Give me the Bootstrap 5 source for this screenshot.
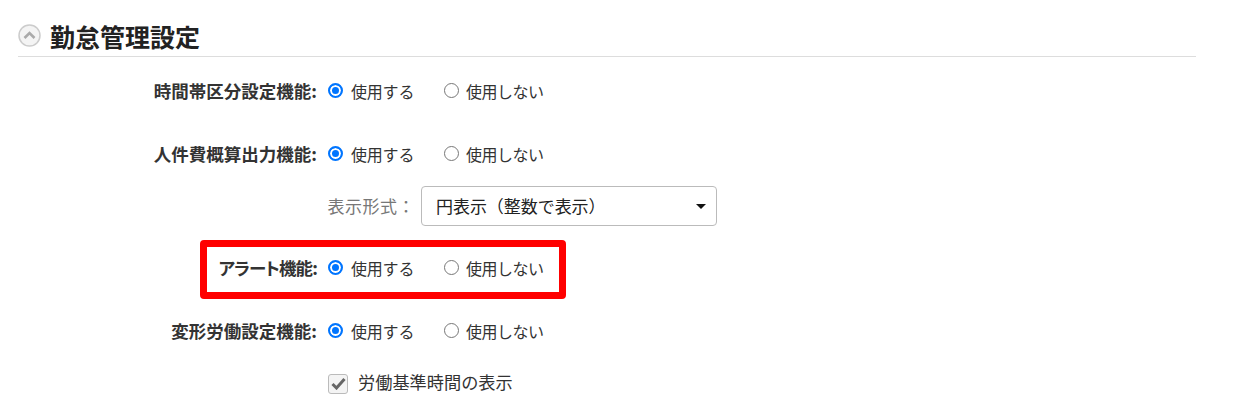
<!DOCTYPE html>
<html lang="ja">
<head>
<meta charset="utf-8">
<title>勤怠管理設定</title>
<link rel="stylesheet" href="https://cdn.jsdelivr.net/npm/bootstrap@5.3.0/dist/css/bootstrap.min.css">
<style>
body{font-family:"Noto Sans CJK JP","Liberation Sans",sans-serif;color:#333;background:#fff;font-size:16px;letter-spacing:-.2px}
.sheet{width:1178px;margin-left:18px;padding-top:18px}
.sect-head{height:39px;border-bottom:1px solid #ddd;gap:9px;padding-bottom:3px}
.sect-title{font-size:25px;font-weight:700;color:#222;margin:0;line-height:36px;letter-spacing:0}
.set-row{height:30px}
.set-label{width:299px;text-align:right;font-weight:700;font-size:17.5px;color:#333;margin:0;letter-spacing:0;white-space:nowrap}
.kana-fit{font-feature-settings:"palt";letter-spacing:-.9px}
.choice{display:flex;align-items:center;margin:0}
.choice input{appearance:none;width:15px;height:15px;border:1px solid #777;border-radius:50%;background:#fff;margin:0 8px 2px 0;flex:none}
.choice input:checked{border:2px solid #0075ff;box-shadow:inset 0 0 0 2px #fff;background:#0075ff}
.choices{margin-left:11px;display:flex}
.c-first{width:116px}
.c-second{letter-spacing:-.5px}
.c-second input{margin-right:7px}
.rows-1{margin-top:19px}
.rows-2{margin-top:33px}
.fmt-row{margin-top:17px;height:40px}
.fmt-label{width:397px;text-align:right;font-size:17px;color:#777;letter-spacing:.5px}
.fmt-select{width:296px;height:40px;border:1px solid #bbb;border-radius:4px;background:#fff;padding:0 14px;margin-left:6px;color:#222;font-size:17px;letter-spacing:-.05px}
.fmt-caret{width:0;height:0;border-left:5.5px solid transparent;border-right:5.5px solid transparent;border-top:5.5px solid #111;margin-right:-4px}
.alert-row{position:relative;margin-top:27px}
.alert-box{position:absolute;left:182px;top:-13px;width:366px;height:59px;border:7px solid #f00;border-radius:4px;pointer-events:none}
.rows-4{margin-top:33px}
.chk-row{margin-top:23px;margin-left:310px;font-size:17.2px;letter-spacing:0}
.chk-mark{width:20px;height:20px;border:1px solid #bbb;border-radius:3px;background:#f4f4f4;margin-right:10px;flex:none}
.chk-text{margin-bottom:4px}
</style>
</head>
<body>
<div class="sheet">
  <div class="sect-head d-flex align-items-center">
    <svg width="23" height="23" viewBox="0 0 23 23" aria-hidden="true"><circle cx="11.5" cy="11.5" r="10.5" fill="#f4f4f4" stroke="#ccc" stroke-width="1.5"/><path d="M6.5 14 L11.5 9 L16.5 14" fill="none" stroke="#aaa" stroke-width="2.6"/></svg>
    <h2 class="sect-title">勤怠管理設定</h2>
  </div>

  <div class="set-row rows-1 d-flex align-items-center">
    <p class="set-label">時間帯区分設定機能:</p>
    <div class="choices">
      <label class="choice c-first"><input type="radio" name="a" checked>使用する</label>
      <label class="choice c-second"><input type="radio" name="a">使用しない</label>
    </div>
  </div>

  <div class="set-row rows-2 d-flex align-items-center">
    <p class="set-label">人件費概算出力機能:</p>
    <div class="choices">
      <label class="choice c-first"><input type="radio" name="b" checked>使用する</label>
      <label class="choice c-second"><input type="radio" name="b">使用しない</label>
    </div>
  </div>

  <div class="fmt-row d-flex align-items-center">
    <div class="fmt-label">表示形式：</div>
    <div class="fmt-select d-flex align-items-center justify-content-between">
      <span>円表示（整数で表示）</span><span class="fmt-caret"></span>
    </div>
  </div>

  <div class="set-row alert-row d-flex align-items-center">
    <p class="set-label kana-fit">アラート機能:</p>
    <div class="choices">
      <label class="choice c-first"><input type="radio" name="c" checked>使用する</label>
      <label class="choice c-second"><input type="radio" name="c">使用しない</label>
    </div>
    <div class="alert-box"></div>
  </div>

  <div class="set-row rows-4 d-flex align-items-center">
    <p class="set-label">変形労働設定機能:</p>
    <div class="choices">
      <label class="choice c-first"><input type="radio" name="d" checked>使用する</label>
      <label class="choice c-second"><input type="radio" name="d">使用しない</label>
    </div>
  </div>

  <div class="chk-row d-flex align-items-center">
    <span class="chk-mark d-flex align-items-center justify-content-center">
      <svg width="15" height="13" viewBox="0 0 15 13" aria-hidden="true"><path d="M1.5 7 L5.5 11 L13.5 2" fill="none" stroke="#666" stroke-width="3"/></svg>
    </span>
    <span class="chk-text">労働基準時間の表示</span>
  </div>
</div>
<script src="https://cdn.jsdelivr.net/npm/bootstrap@5.3.0/dist/js/bootstrap.bundle.min.js"></script>
</body>
</html>
